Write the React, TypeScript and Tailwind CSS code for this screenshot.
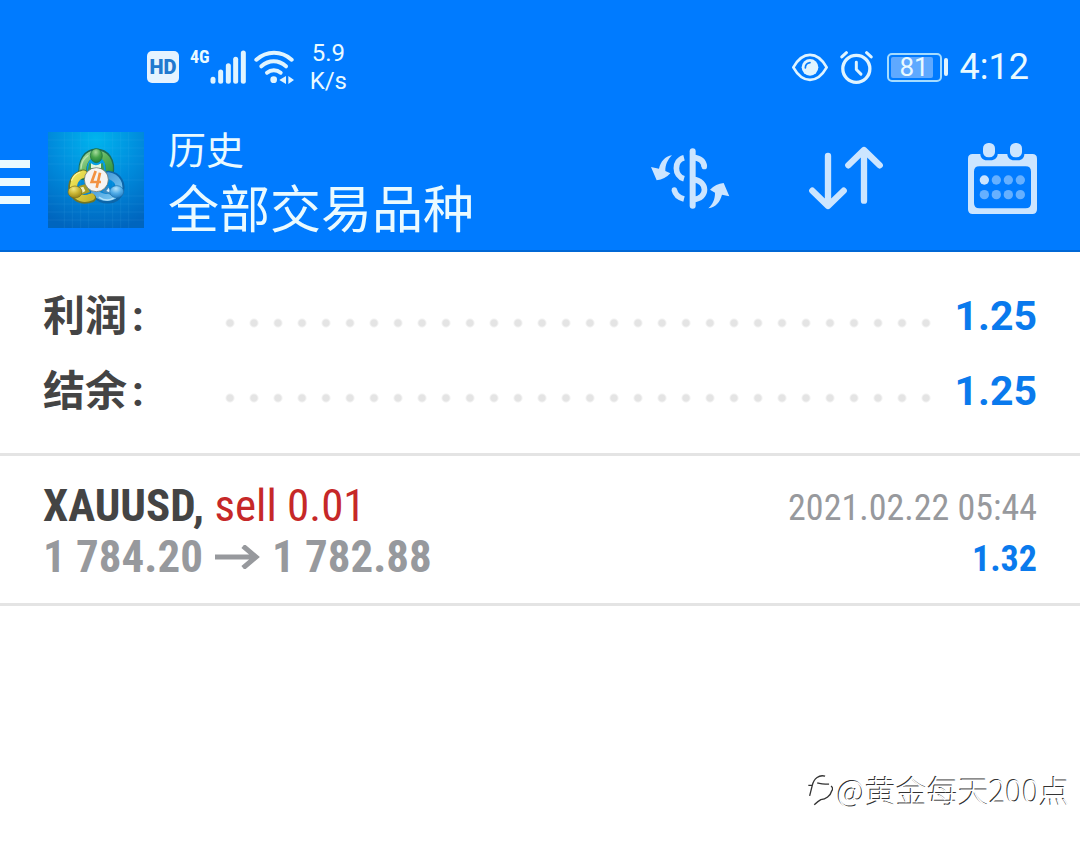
import type { ReactNode } from 'react';

const signalBars = [
  { x: 244, top: 143 },
  { x: 267, top: 121 },
  { x: 290, top: 102 },
  { x: 312, top: 83 },
  { x: 335, top: 64 },
];

function SignalIcon() {
  return (
    <svg viewBox="235 55 108 102" className="h-[34px] w-9" aria-hidden="true">
      {signalBars.map((bar) => (
        <path key={bar.x} d={`M${bar.x} ${bar.top}V149`} stroke="#e0f4ff" strokeWidth="15" strokeLinecap="round" />
      ))}
    </svg>
  );
}

function WifiIcon() {
  return (
    <svg viewBox="370 55 120 102" className="h-[34px] w-10" fill="none" aria-hidden="true">
      <g stroke="#e0f4ff" strokeWidth="12" strokeLinecap="round">
        <path d="M377 84C408 56 452 56 483 84" />
        <path d="M392 104C415 84 443 84 466 104" />
        <path d="M409 123C421 113 438 113 450 123" />
      </g>
      <circle cx="429" cy="144" r="10" fill="#e0f4ff" />
      <path d="M446 145L466 133V157ZM473 133V157L490 145Z" fill="#e0f4ff" />
    </svg>
  );
}

function EyeIcon() {
  return (
    <svg viewBox="36 48 108 90" className="h-[30px] w-9" fill="none" aria-hidden="true">
      <path d="M40 94C68 44 112 44 140 94C112 144 68 144 40 94Z" stroke="#e0f4ff" strokeWidth="8" strokeLinejoin="round" />
      <circle cx="90" cy="94" r="25" fill="#e0f4ff" />
      <path d="M76 96C76 87 82 81 90 80" stroke="#007bff" strokeWidth="5" strokeLinecap="round" />
    </svg>
  );
}

function AlarmIcon() {
  return (
    <svg viewBox="180 44 99 100" className="h-[33px] w-[33px]" fill="none" stroke="#e0f4ff" strokeLinecap="round" aria-hidden="true">
      <circle cx="229" cy="98" r="41" strokeWidth="10" />
      <path d="M229 78V100L243 114" strokeWidth="9" strokeLinejoin="round" />
      <path d="M185 62L199 49M260 49L274 62" strokeWidth="9" />
    </svg>
  );
}

function Battery() {
  return (
    <div className="flex items-center gap-[2px]">
      <div className="relative flex h-[29px] w-[55px] rounded-[5px] border-2 border-[#a5dcff] p-[2px]">
        <span className="block w-[42px] rounded-[2px] bg-[#5fa9ff]" />
        <span className="absolute inset-0 flex items-center justify-center text-[26px] leading-none">81</span>
      </div>
      <span className="h-[18px] w-1 rounded-sm bg-[#e0f4ff]" />
    </div>
  );
}

function AppLogo() {
  return (
    <svg viewBox="144 36 288 288" className="h-24 w-24 shrink-0" aria-label="MetaTrader 4" role="img">
      <defs>
        <radialGradient id="sky" cx="50%" cy="8%" r="95%">
          <stop offset="0" stopColor="#00b4ee" />
          <stop offset=".5" stopColor="#008bdc" />
          <stop offset="1" stopColor="#0065be" />
        </radialGradient>
        <linearGradient id="green" x1="0" y1="0" x2="1" y2="1">
          <stop offset="0" stopColor="#a4d89b" />
          <stop offset=".5" stopColor="#5cb35c" />
          <stop offset="1" stopColor="#2f9440" />
        </linearGradient>
        <linearGradient id="yellow" x1="0" y1="0" x2="1" y2="1">
          <stop offset="0" stopColor="#f1e65a" />
          <stop offset="1" stopColor="#c8b62c" />
        </linearGradient>
        <linearGradient id="blue" x1="0" y1="0" x2="1" y2="1">
          <stop offset="0" stopColor="#3b8fd2" />
          <stop offset="1" stopColor="#7ccaf4" />
        </linearGradient>
        <radialGradient id="greenBall" cx="45%" cy="25%" r="80%">
          <stop offset="0" stopColor="#a8dd9d" />
          <stop offset=".5" stopColor="#46a44b" />
          <stop offset="1" stopColor="#1b7a34" />
        </radialGradient>
        <radialGradient id="yellowBall" cx="40%" cy="25%" r="80%">
          <stop offset="0" stopColor="#f3e983" />
          <stop offset=".5" stopColor="#c9b433" />
          <stop offset="1" stopColor="#8d7b18" />
        </radialGradient>
        <radialGradient id="blueBall" cx="45%" cy="25%" r="80%">
          <stop offset="0" stopColor="#b4e3fb" />
          <stop offset=".5" stopColor="#52ade8" />
          <stop offset="1" stopColor="#1f78bd" />
        </radialGradient>
      </defs>
      <path d="M144 36H432V324H144Z" fill="url(#sky)" />
      <path
        d="M193 36V324M217 36V324M242 36V324M266 36V324M314 36V324M338 36V324M362 36V324M386 36V324M144 60H432M144 84H432M144 108H432M144 132H432M144 180H432M144 228H432M144 252H432M144 276H432M144 300H432"
        stroke="#5fc6f5"
        strokeOpacity=".16"
        strokeWidth="2"
      />
      <g fill="none" strokeLinecap="round">
        <path d="M249 168C242 120 265 98 288 98C315 98 337 120 328 165" stroke="#1d6d55" strokeWidth="25" />
        <path d="M249 165C244 122 266 101 288 101C313 101 334 122 327 162" stroke="url(#green)" strokeWidth="21" />
        <path d="M243 145C244 124 252 114 264 107" stroke="#bce3ae" strokeWidth="4" />
        <path d="M325 165C355 168 368 195 357 219C345 242 310 247 283 219" stroke="#0c66aa" strokeWidth="25" />
        <path d="M325 167C351 171 364 195 352 215C340 237 310 239 284 217" stroke="url(#blue)" strokeWidth="21" />
        <path d="M298 232C311 241 327 242 340 235" stroke="#b4e2fb" strokeWidth="4" />
        <path d="M251 161C225 167 211 191 220 217C230 239 253 243 276 234" stroke="#6f7526" strokeWidth="25" />
        <path d="M251 162C228 168 215 191 223 215C232 235 253 240 274 231" stroke="url(#yellow)" strokeWidth="21" />
        <path d="M215 181C219 169 228 160 239 157" stroke="#fff69d" strokeWidth="4" />
      </g>
      <path d="M268 128Q288 146 308 128L314 156H262Z" fill="#3f9850" />
      <path d="M273 130Q288 142 303 130L303 145H273Z" fill="#e2f4df" />
      <path d="M237 198L244 225L270 216L257 192Z" fill="#a79b27" />
      <path d="M240 203L246 219L256 213L250 200Z" fill="#f4efbb" />
      <path d="M325 197L334 225L306 216Z" fill="#3a8ac4" />
      <path d="M326 203L333 219L319 213Z" fill="#d9f0ff" />
      <ellipse cx="289" cy="107" rx="18" ry="21" fill="url(#greenBall)" stroke="#1b6e41" strokeWidth="2" />
      <ellipse cx="225" cy="216" rx="21" ry="18" fill="url(#yellowBall)" stroke="#7a6d1a" strokeWidth="2" />
      <ellipse cx="350" cy="215" rx="21" ry="18" fill="url(#blueBall)" stroke="#1d70ad" strokeWidth="2" />
      <circle cx="289" cy="179" r="36" fill="#f5f4f3" stroke="#5c655b" strokeWidth="2" />
      <path d="M287 153L275 186H303M300 158L290 203" fill="none" stroke="#f29242" strokeWidth="8" />
    </svg>
  );
}

function CurrencyIcon() {
  return (
    <svg viewBox="33 50 237 186" className="h-[62px] w-[79px]" fill="none" aria-hidden="true">
      <g stroke="#cce5ff" strokeWidth="17">
        <path d="M158 63V226" strokeWidth="18" strokeLinecap="round" />
        <path d="M132 82C101 90 102 137 132 145" />
        <path d="M103 179C106 193 116 202 132 206" />
        <path d="M160 82C180 83 191 92 193 109" />
        <path d="M160 148C204 150 205 206 160 207" />
      </g>
      <circle cx="103" cy="179" r="8" fill="#cce5ff" />
      <circle cx="193" cy="109" r="8" fill="#cce5ff" />
      <path d="M96 75C75 78 62 94 57 115L33 110L50 150C67 148 80 141 91 129L76 122C76 104 82 89 96 75Z" fill="#cce5ff" />
      <path d="M205 234C219 220 225 207 225 187L210 178C222 166 235 160 251 158L268 198L246 193C240 214 228 231 205 234Z" fill="#cce5ff" />
    </svg>
  );
}

function SortIcon() {
  return (
    <svg
      viewBox="507 52 222 192"
      className="h-16 w-[74px]"
      fill="none"
      stroke="#cce5ff"
      strokeWidth="19"
      strokeLinecap="round"
      strokeLinejoin="round"
      aria-hidden="true"
    >
      <path d="M564 82V230M517 186L564 232L611 186" />
      <path d="M672 216V66M625 110L672 64L719 110" />
    </svg>
  );
}

function CalendarIcon() {
  return (
    <svg viewBox="54 38 207 213" className="h-[71px] w-[69px]" aria-hidden="true">
      <path
        fillRule="evenodd"
        d="M68 71H91C91 82 99 90 110 90H122C134 90 143 82 143 71H172C172 82 181 90 192 90H204C216 90 223 82 223 71H247Q261 71 261 85V237Q261 251 247 251H68Q54 251 54 237V85Q54 71 68 71ZM88 108Q72 108 72 124V218Q72 234 88 234H227Q243 234 243 218V124Q243 108 227 108Z"
        fill="#cce5ff"
      />
      <rect x="99" y="38" width="36" height="43" rx="16" fill="#cce5ff" />
      <rect x="180" y="38" width="36" height="43" rx="16" fill="#cce5ff" />
      {[103, 139, 175, 211].map((cx) => (
        <g key={cx} fill="#66b0ff">
          <circle cx={cx} cy="149" r="14" fill={cx === 103 ? '#cce5ff' : '#66b0ff'} />
          <circle cx={cx} cy="193" r="14" />
        </g>
      ))}
    </svg>
  );
}

function IconButton({ label, children }: { label: string; children: ReactNode }) {
  return (
    <button type="button" aria-label={label} className="shrink-0">
      {children}
    </button>
  );
}

function SummaryRow({ label, value }: { label: string; value: string }) {
  return (
    <div className="flex h-[75px] items-center text-[42px] font-bold">
      <dt className="w-[175px] shrink-0 text-[#444]">
        {label}
        <span className="ml-[5px]">:</span>
      </dt>
      <dd className="flex flex-1 items-center text-[41px] text-[#0a7aed]">
        <span className="mt-3 h-6 flex-1 bg-[radial-gradient(circle,#e4e4e4_3px,transparent_5px)] bg-[length:24px_24px]" />
        <span className="w-[99px] text-right">{value}</span>
      </dd>
    </div>
  );
}

export default function App() {
  return (
    <div className="min-h-screen bg-white font-['Roboto','Noto_Sans_CJK_SC',sans-serif]">
      <header className="border-b-2 border-[#0068d6] bg-[#007bff] pb-[10px] text-[#eafaff]">
        <div className="flex h-[120px] items-center justify-between pt-[14px] pr-[51px] pl-[147px]">
          <div className="flex items-center">
            <span className="flex h-8 w-8 items-center justify-center rounded-[5px] bg-[#e5f3ff] text-xl font-black text-[#2079cf]">
              HD
            </span>
            <span className="-mt-5 ml-[11px] font-['Roboto_Condensed','Liberation_Sans_Narrow',sans-serif] text-lg leading-none font-bold">
              4G
            </span>
            <SignalIcon />
            <span className="ml-2">
              <WifiIcon />
            </span>
            <span className="ml-4 text-center text-2xl leading-7">
              5.9
              <br />
              K/s
            </span>
          </div>
          <div className="flex items-center gap-3">
            <EyeIcon />
            <AlarmIcon />
            <span className="ml-[2px]">
              <Battery />
            </span>
            <time className="text-4xl">4:12</time>
          </div>
        </div>

        <div className="flex h-[120px] items-center pr-[43px]">
          <button type="button" aria-label="菜单" className="mt-1 mr-[18px] flex w-[30px] flex-col gap-[10px]">
            <span className="h-2 bg-[#eafaff]" />
            <span className="h-2 bg-[#eafaff]" />
            <span className="h-2 bg-[#eafaff]" />
          </button>
          <AppLogo />
          <div className="flex-1 pt-[6px] pl-6">
            <h1 className="text-[38px] leading-[56px]">历史</h1>
            <button type="button" className="block text-[51px] leading-[64px] whitespace-nowrap">
              全部交易品种
            </button>
          </div>
          <div className="mb-1 flex items-center">
            <IconButton label="货币">
              <CurrencyIcon />
            </IconButton>
            <span className="mr-[85px] ml-[79px] flex">
              <IconButton label="排序">
                <SortIcon />
              </IconButton>
            </span>
            <IconButton label="日期">
              <CalendarIcon />
            </IconButton>
          </div>
        </div>
      </header>

      <main>
        <dl className="border-b-3 border-[#e4e4e4] px-[43px] pt-[27px] pb-6">
          <SummaryRow label="利润" value="1.25" />
          <SummaryRow label="结余" value="1.25" />
        </dl>

        <article className="flex justify-between border-b-3 border-[#e4e4e4] px-[43px] pt-6 pb-[18px] font-['Roboto_Condensed','Liberation_Sans_Narrow','Liberation_Sans',sans-serif]">
          <div className="text-[45px] leading-[51px]">
            <h2 className="font-bold text-[#444]">
              XAUUSD, <span className="font-normal text-[#c62828]">sell 0.01</span>
            </h2>
            <p className="flex items-center font-bold text-[#97999d]">
              1 784.20
              <svg viewBox="0 0 45 24" className="mx-3 h-6 w-[45px]" fill="none" stroke="currentColor" strokeWidth="5" aria-label="→" role="img">
                <path d="M0 12H42M28 1L41 12L28 23" />
              </svg>
              1 782.88
            </p>
          </div>
          <div className="pt-[3px] text-right text-4xl leading-[51px]">
            <p className="leading-[51px] text-[#97999d]">2021.02.22 05:44</p>
            <p className="leading-[51px] font-bold text-[#0a7aed]">1.32</p>
          </div>
        </article>
      </main>

      <footer className="flex items-center justify-end gap-1 pt-[162px] pr-[10px] font-['Noto_Sans_CJK_SC',sans-serif] text-[31px] leading-[44px] font-light text-white [text-shadow:-1px_-1px_0_#333]">
        <svg viewBox="85 58 76 96" className="h-8 w-[25px]" fill="none" stroke="#333" strokeWidth="4" aria-hidden="true">
          <path d="M86 92H98M90 124L98 92C103 70 119 59 137 64M113 84C125 88 137 88 149 88M155 94C161 99 161 104 157 109C153 124 139 134 124 135C116 139 111 144 104 151" />
        </svg>
        <span>@黄金每天200点</span>
      </footer>
    </div>
  );
}
